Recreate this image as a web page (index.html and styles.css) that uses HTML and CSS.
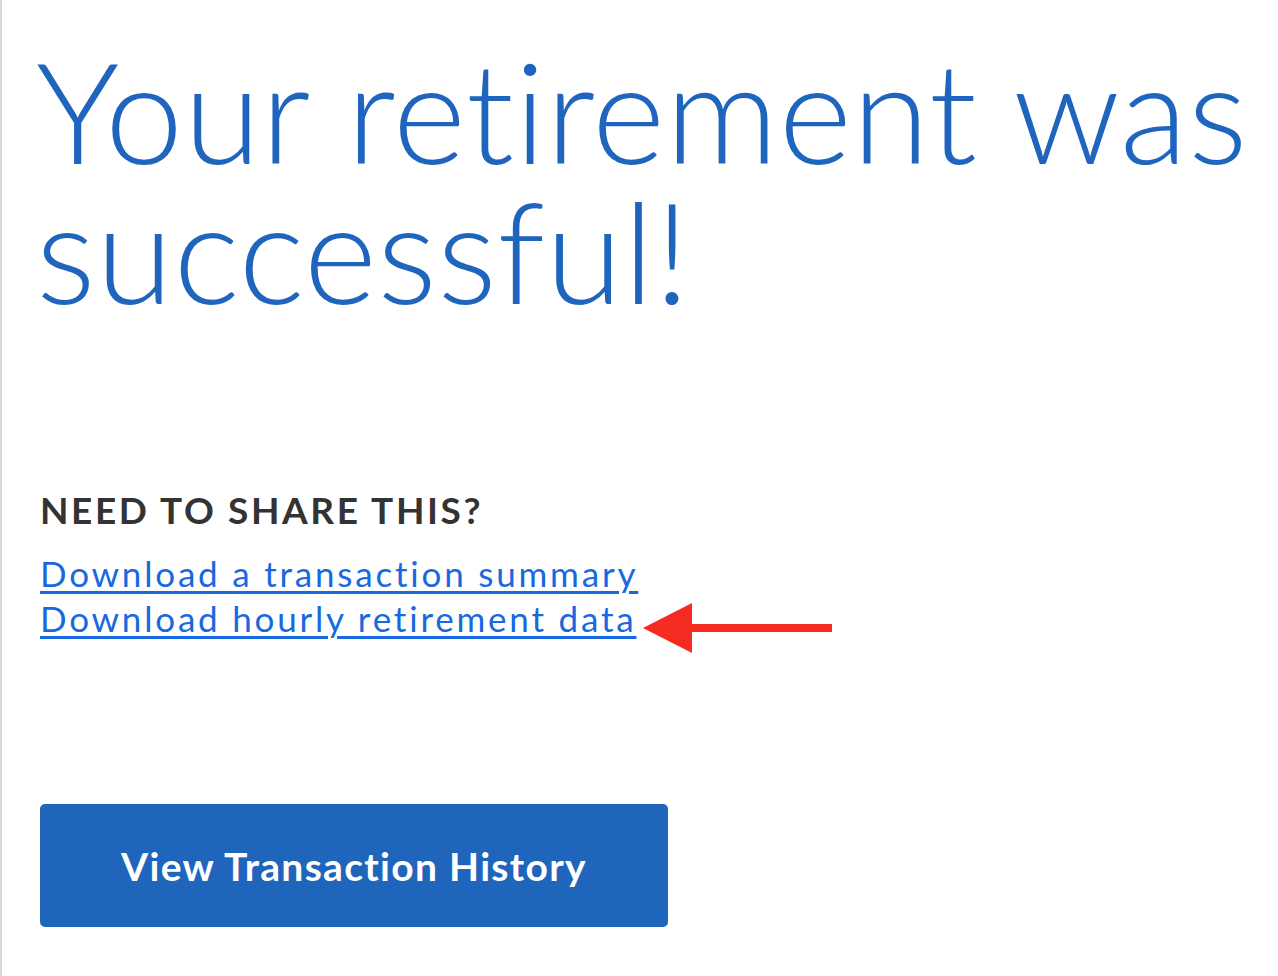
FILE: index.html
```html
<!DOCTYPE html>
<html lang="en">
<head>
<meta charset="utf-8">
<title>Retirement successful</title>
<link rel="stylesheet" href="styles.css">
</head>
<body>
<main class="page">
  <h1 class="title">Your retirement was<br>successful!</h1>
  <section class="share">
    <h2 class="share-title">NEED TO SHARE THIS?</h2>
    <div class="links">
      <a class="link" href="#">Download a transaction summary</a>
      <div class="link-row">
        <a class="link" href="#">Download hourly retirement data</a>
        <svg class="arrow" width="190" height="50" viewBox="0 0 190 50" aria-hidden="true">
          <polygon points="0,25 49,0 49,50" fill="#f52a20"/>
          <rect x="48" y="21" width="141" height="8" fill="#f52a20"/>
        </svg>
      </div>
    </div>
  </section>
  <a class="btn" href="#">View Transaction History</a>
</main>
</body>
</html>
```

FILE: styles.css
```css
html, body {
  margin: 0;
  padding: 0;
  background: #ffffff;
}

.page {
  box-sizing: border-box;
  min-height: 976px;
  border-left: 2px solid #d9d9d9;
  padding: 40px 0 0 38px;
  font-family: Lato, "Liberation Sans", sans-serif;
  font-variant-ligatures: none;
  display: flex;
  flex-direction: column;
  align-items: flex-start;
  overflow: hidden;
}

.title {
  margin: 0 0 0 -4px;
  font-family: Lato, "Liberation Sans", sans-serif;
  font-weight: 300;
  font-size: 140px;
  line-height: 140px;
  color: #1f65bd;
  white-space: nowrap;
  letter-spacing: 0.5px;
  font-variant-ligatures: none;
}

.share {
  margin-top: 170px;
  display: flex;
  flex-direction: column;
}

.share-title {
  margin: 0;
  font-size: 37px;
  line-height: 40px;
  font-weight: 700;
  letter-spacing: 2.6px;
  color: #333333;
}

.links {
  margin-top: 21px;
  display: flex;
  flex-direction: column;
  align-items: flex-start;
}

.link {
  font-size: 35px;
  line-height: 45px;
  letter-spacing: 2.8px;
  color: #1869e0;
  text-decoration: underline;
  text-decoration-thickness: 3px;
  text-underline-offset: 4px;
}

.link-row {
  display: flex;
  align-items: flex-start;
}

.arrow {
  margin: 7px 0 -12px 7px;
  flex: none;
}

.btn {
  margin-top: 163px;
  box-sizing: border-box;
  width: 628px;
  height: 123px;
  display: flex;
  align-items: center;
  justify-content: center;
  background: #1f65bc;
  border-radius: 5px;
  color: #ffffff;
  font-size: 39px;
  font-weight: 700;
  letter-spacing: 1.3px;
  text-decoration: none;
}
```
